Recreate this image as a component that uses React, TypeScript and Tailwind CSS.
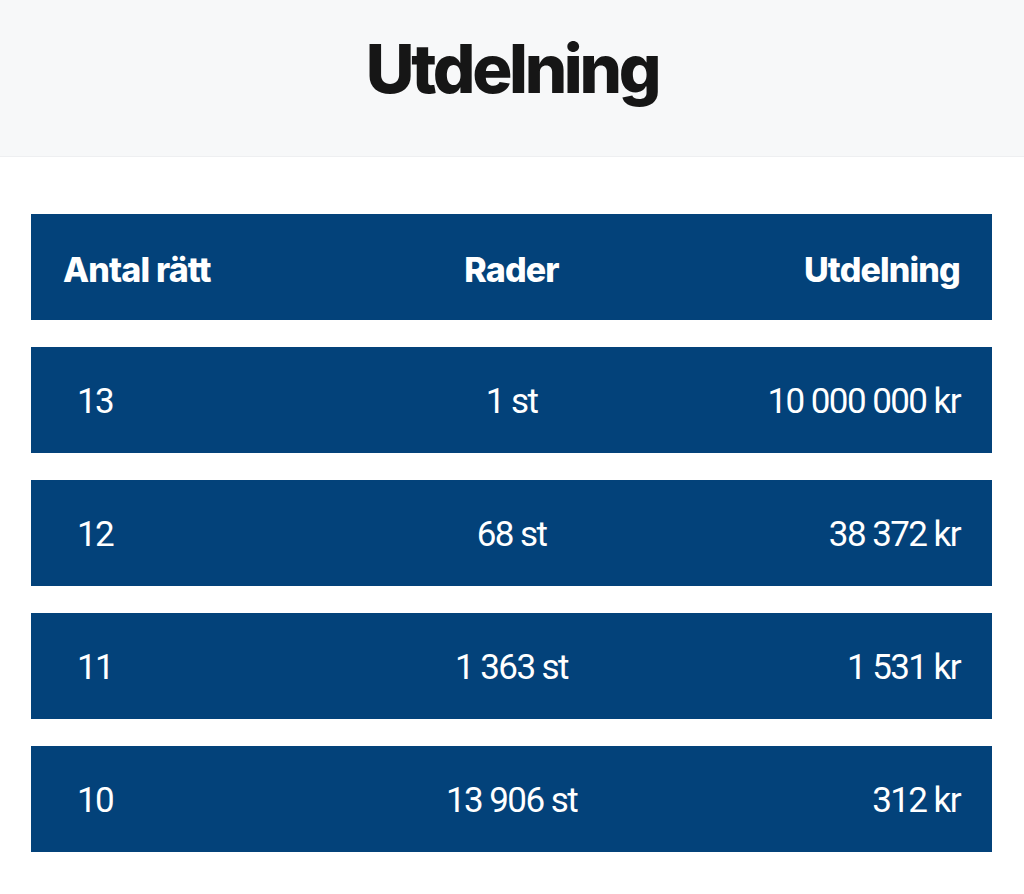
const rows = [
  { antal: "13", rader: "1 st", utdelning: "10 000 000 kr" },
  { antal: "12", rader: "68 st", utdelning: "38 372 kr" },
  { antal: "11", rader: "1 363 st", utdelning: "1 531 kr" },
  { antal: "10", rader: "13 906 st", utdelning: "312 kr" },
];

export default function App() {
  return (
    <div className="min-h-[894px] bg-white font-['Inter',sans-serif]">
      {/* Page header */}
      <div className="flex h-[157px] items-start justify-center border-b border-[#eeeff1] bg-[#f7f8f9] pt-[35px]">
        <h1 className="text-[67px] font-extrabold leading-none tracking-[-0.05em] text-[#161616]">
          Utdelning
        </h1>
      </div>

      {/* Table */}
      <div className="flex flex-col gap-[27px] pl-[31px] pr-[32px] pt-[57px]">
        <div className="grid h-[106px] grid-cols-3 items-center bg-[#03427a] px-[32px] pt-[4px] text-[34px] font-extrabold tracking-[-0.025em] text-white">
          <span>Antal rätt</span>
          <span className="text-center">Rader</span>
          <span className="text-right">Utdelning</span>
        </div>
        {rows.map((r) => (
          <div
            key={r.antal}
            className="grid h-[106px] grid-cols-3 items-center bg-[#03427a] px-[32px] pt-[4px] font-['Roboto',sans-serif] text-[35px] tracking-[-0.045em] text-white"
          >
            <span className="pl-[14px]">{r.antal}</span>
            <span className="text-center">{r.rader}</span>
            <span className="text-right">{r.utdelning}</span>
          </div>
        ))}
      </div>
    </div>
  );
}
